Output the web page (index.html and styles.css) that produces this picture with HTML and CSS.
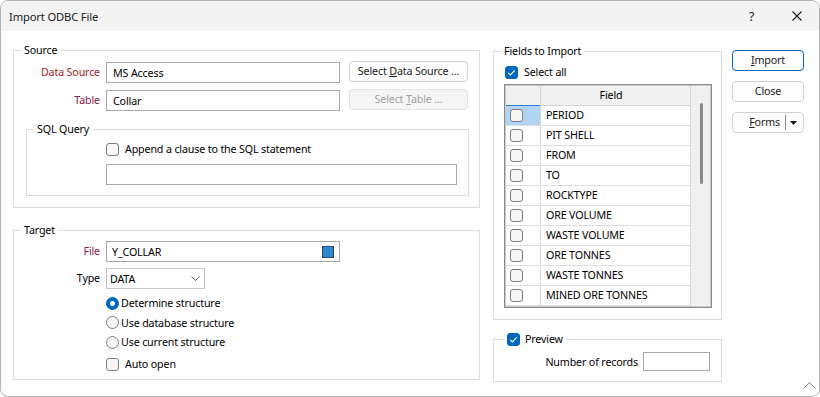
FILE: index.html
```html
<!DOCTYPE html>
<html lang="en">
<head>
    <meta charset="UTF-8">
    <meta name="viewport" content="width=device-width, initial-scale=1.0">
    <title>Import ODBC File</title>
    <link rel="stylesheet" href="styles.css">
</head>
<body>
    <div class="window">
        <div class="titlebar">
            <span class="title">Import ODBC File</span>
            <div class="caption">
                <span class="help">?</span>
                <svg class="close-x" width="10" height="10" viewBox="0 0 10 10"><path d="M0.5 0.5L9.5 9.5M9.5 0.5L0.5 9.5" stroke="#1b1b1b" stroke-width="1.1" fill="none"/></svg>
            </div>
        </div>

        <div class="content">
            <!-- Source and target -->
            <div class="col-left">
                <fieldset class="group source">
                    <legend>Source</legend>
                    <div class="row">
                        <span class="lbl lbl-red">Data Source</span>
                        <input class="text" value="MS Access">
                        <button class="btn wide">Select <u>D</u>ata Source ...</button>
                    </div>
                    <div class="row second">
                        <span class="lbl lbl-plum">Table</span>
                        <input class="text" value="Collar">
                        <button class="btn wide" disabled>Select <u>T</u>able ...</button>
                    </div>
                    <fieldset class="group sql">
                        <legend>SQL Query</legend>
                        <div class="check-row sql-check">
                            <span class="cb"></span>
                            <span>Append a clause to the SQL statement</span>
                        </div>
                        <input class="text sql-text" value="">
                    </fieldset>
                </fieldset>

                <fieldset class="group target">
                    <legend>Target</legend>
                    <div class="trow">
                        <span class="lbl lbl-plum">File</span>
                        <div class="text file-box">
                            <span>Y_COLLAR</span>
                            <span class="file-swatch"></span>
                        </div>
                    </div>
                    <div class="trow type-row">
                        <span class="lbl">Type</span>
                        <div class="combo">
                            <span>DATA</span>
                            <svg width="9" height="5" viewBox="0 0 9 5"><path d="M0.5 0.5L4.5 4.5L8.5 0.5" stroke="#505050" stroke-width="1" fill="none"/></svg>
                        </div>
                    </div>
                    <div class="radios">
                        <div class="radio-row"><span class="radio on"></span><span>Determine structure</span></div>
                        <div class="radio-row"><span class="radio"></span><span>Use database structure</span></div>
                        <div class="radio-row"><span class="radio"></span><span>Use current structure</span></div>
                    </div>
                    <div class="check-row auto-open">
                        <span class="cb"></span>
                        <span>Auto open</span>
                    </div>
                </fieldset>
            </div>

            <!-- Fields list and preview -->
            <div class="col-mid">
                <fieldset class="group fields">
                    <legend>Fields to Import</legend>
                    <div class="check-row select-all">
                        <span class="cb on"><svg width="13" height="13" viewBox="0 0 13 13"><path d="M3.2 6.8L5.4 9L9.8 4.4" stroke="#fff" stroke-width="1.1" fill="none"/></svg></span>
                        <span>Select all</span>
                    </div>
                    <div class="grid">
                        <div class="grid-main">
                            <div class="grid-head">
                                <div class="c1 sel"></div>
                                <div class="c2">Field</div>
                            </div>
                            <div id="rows"></div>
                        </div>
                        <div class="vscroll"><div class="thumb"></div></div>
                    </div>
                </fieldset>

                <fieldset class="group preview">
                    <legend>
                        <span class="legend-check">
                            <span class="cb on"><svg width="13" height="13" viewBox="0 0 13 13"><path d="M3.2 6.8L5.4 9L9.8 4.4" stroke="#fff" stroke-width="1.1" fill="none"/></svg></span>
                            <span>Preview</span>
                        </span>
                    </legend>
                    <div class="records">
                        <span>Number of records</span>
                        <input class="text num" value="">
                    </div>
                </fieldset>
            </div>

            <!-- Dialog buttons -->
            <div class="col-btns">
                <button class="btn default"><u>I</u>mport</button>
                <button class="btn">Close</button>
                <button class="btn split">
                    <span><u>F</u>orms</span>
                    <span class="split-line"></span>
                    <svg width="7" height="4" viewBox="0 0 7 4"><path d="M0 0H7L3.5 4Z" fill="#1b1b1b"/></svg>
                </button>
            </div>
        </div>

        <svg class="grip" width="13" height="7" viewBox="0 0 13 7"><path d="M0.5 6.5L6.5 0.7L12.5 6.5" stroke="#7a7a7a" stroke-width="1" fill="none"/></svg>
    </div>

    <script>
        // Field names shown in the import list
        const fields = ['PERIOD', 'PIT SHELL', 'FROM', 'TO', 'ROCKTYPE', 'ORE VOLUME',
                        'WASTE VOLUME', 'ORE TONNES', 'WASTE TONNES', 'MINED ORE TONNES'];

        const rows = document.getElementById('rows');
        fields.forEach((name, i) => {
            const row = document.createElement('div');
            row.className = 'grid-row';
            row.innerHTML = `
                <div class="c1${i === 0 ? ' hl' : ''}"><span class="cb"></span></div>
                <div class="c2">${name}</div>
            `;
            rows.appendChild(row);
        });
    </script>
</body>
</html>
```

FILE: styles.css
```css
/* Dialog frame */
body { margin: 0; background: #fff; font-family: "Noto Sans", "Open Sans", sans-serif; font-size: 10.7px; letter-spacing: -0.15px; color: #000; }
.window { position: relative; width: 820px; height: 397px; box-sizing: border-box; border: 1px solid #b4b4b4; border-radius: 8px; overflow: hidden; background: #fff; }
.titlebar { height: 30px; background: #f3f3f3; display: flex; align-items: center; justify-content: space-between; padding: 0 17px 0 8px; }
.title { font-size: 11.2px; color: #1b1b1b; }
.caption { display: flex; align-items: center; }
.help { font-size: 12px; color: #1b1b1b; margin-right: 38px; }
.close-x { display: block; }
.grip { position: absolute; right: 3px; bottom: 7px; }

/* Columns */
.content { display: flex; align-items: flex-start; padding: 11px 0 0 12px; }
.col-left { width: 467px; }
.col-mid { width: 229px; margin-left: 13px; margin-top: 1px; }
.col-btns { width: 72px; margin-left: 10px; margin-top: 8px; display: flex; flex-direction: column; gap: 10px; }

/* Group boxes */
.group { margin: 0; padding: 0; min-width: 0; border: 1px solid #dcdcdc; }
.group legend { margin-left: 7px; padding: 0 3px; line-height: 16px; height: 16px; }
.source { padding: 3px 0 11px 0; }
.sql { margin: 10px 10px 0 12px; padding: 4px 0 10px 0; }
.target { margin-top: 14px; padding: 3px 0 5px 0; }
.fields { padding: 5px 0 11px 0; }
.preview { margin-top: 12px; padding: 5px 11px 10px 0; }
.preview legend { margin-left: 10px; line-height: 15px; height: 15px; }

/* Form rows */
.row { display: flex; align-items: flex-start; height: 22px; }
.row.second { margin-top: 6px; }
.lbl { width: 86px; margin-right: 6px; text-align: right; line-height: 21px; flex: none; }
.row .lbl { margin-top: 1px; }
.lbl-red { color: #a31818; }
.lbl-plum { color: #8a1848; }
.text { box-sizing: border-box; height: 21px; border: 1px solid #a8a8a8; background: #fff; font: inherit; letter-spacing: inherit; color: #000; padding: 0 6px; outline: none; }
.row .text { width: 234px; margin-top: 1px; margin-right: 9px; }
.sql-text { width: 351px; margin: 7px 0 0 79px; display: block; }

.trow { display: flex; align-items: center; height: 21px; }
.type-row { margin-top: 6px; }
.file-box { width: 234px; display: flex; align-items: center; justify-content: space-between; padding: 0 5px 0 5px; }
.file-swatch { width: 12px; height: 12px; box-sizing: border-box; background: #2a88cf; border: 1px solid #2e4a66; }
.combo { box-sizing: border-box; width: 99px; height: 21px; border: 1px solid #c4c4c4; display: flex; align-items: center; justify-content: space-between; padding: 0 4px 0 3px; }

/* Check boxes and radios */
.check-row { display: flex; align-items: center; gap: 6px; height: 16px; }
.sql-check { margin-left: 79px; }
.select-all { margin-left: 11px; }
.auto-open { margin: 2px 0 0 92px; height: 20px; }
.cb { width: 13px; height: 13px; box-sizing: border-box; border: 1px solid #7c7c7c; border-radius: 3px; background: #f7f7f7; flex: none; display: block; }
.cb.on { background: #0067c0; border-color: #0067c0; }
.cb.on svg { display: block; margin: -1px; }
.radios { margin: 4px 0 0 92px; }
.radio-row { display: flex; align-items: center; gap: 2px; height: 20px; }
.radio-row:nth-child(2) { height: 19px; }
.radio { width: 13px; height: 13px; box-sizing: border-box; border-radius: 50%; border: 1px solid #7c7c7c; background: #f7f7f7; flex: none; display: flex; align-items: center; justify-content: center; }
.radio.on { background: #0067c0; border-color: #0067c0; }
.radio.on::after { content: ""; width: 5px; height: 5px; border-radius: 50%; background: #fff; }
.legend-check { display: flex; align-items: center; gap: 5px; }

/* Fields grid */
.grid { margin: 4px 0 0 10px; display: flex; width: 208px; height: 224px; box-sizing: border-box; border: 1px solid #8c8c8c; padding: 1px; box-shadow: inset 0 0 0 1px #c9c9c9; }
.grid-main { width: 185px; background: #fff; }
.grid-head { display: flex; height: 20px; box-sizing: border-box; background: #f0f0f0; border-bottom: 1px solid #d4d4d4; }
.grid-head .c2 { text-align: center; padding-right: 14px; line-height: 19px; }
.grid-head .sel { box-shadow: inset 0 -1px 0 #2b7fd3; height: 20px; }
.grid-row { display: flex; height: 20px; box-sizing: border-box; border-bottom: 1px solid #dedede; }
.c1 { width: 35px; box-sizing: border-box; border-right: 1px solid #d6d6d6; display: flex; align-items: center; padding-left: 4px; }
.c1.hl { background: #b1d3f4; }
.c2 { width: 150px; box-sizing: border-box; border-right: 1px solid #d6d6d6; padding-left: 5px; line-height: 19px; white-space: nowrap; }
.vscroll { width: 19px; background: #f0f0f0; }
.thumb { width: 3px; height: 81px; margin: 17px 0 0 9px; border-radius: 2px; background: #8a8a8a; }

/* Preview */
.records { display: flex; align-items: center; justify-content: flex-end; gap: 5px; }
.num { width: 67px; height: 19px; padding: 0 3px; }

/* Buttons */
.btn { box-sizing: border-box; height: 21px; padding: 0; border: 1px solid #d0d0d0; border-radius: 4px; background: #fdfdfd; font: inherit; letter-spacing: inherit; color: #1b1b1b; line-height: 19px; }
.btn.wide { width: 119px; }
.btn:disabled { background: #f5f5f5; border-color: #e3e3e3; color: #a2a2a2; }
.btn.default { border-color: #0067c0; }
.btn.split { display: flex; align-items: center; justify-content: flex-end; padding-right: 6px; }
.split-line { width: 1px; height: 15px; background: #8a8a8a; margin: 0 4px 0 5px; }
```
